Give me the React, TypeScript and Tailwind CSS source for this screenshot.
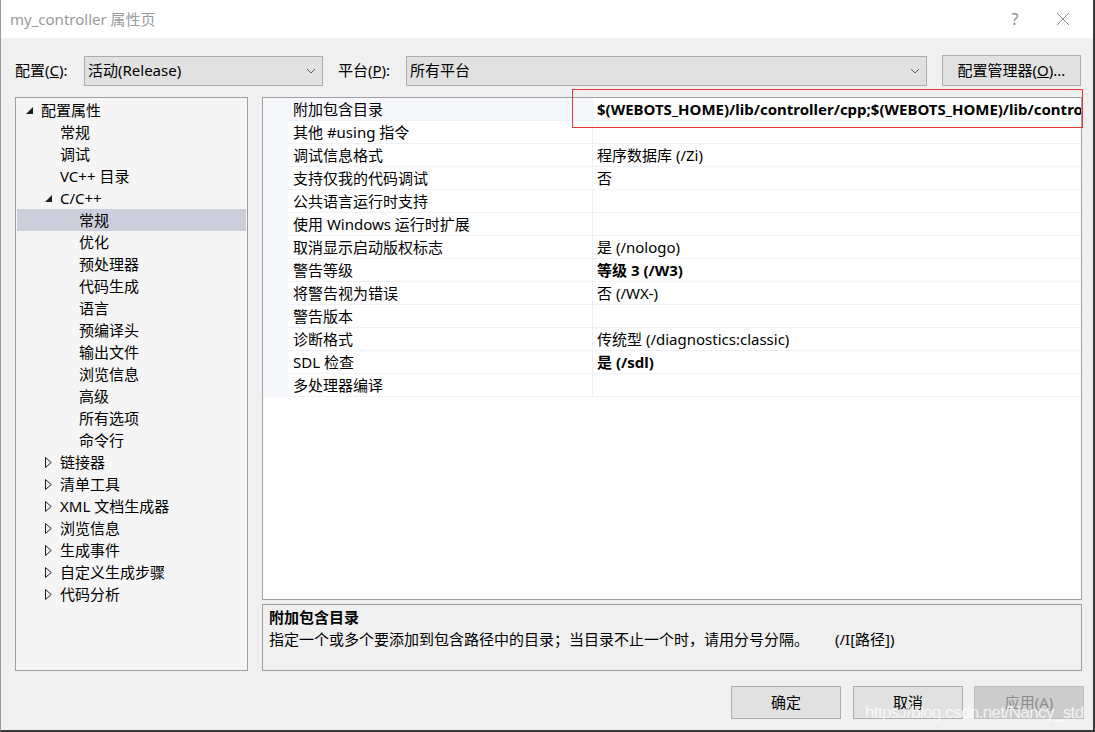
import React from 'react';

const font = "font-['Noto_Sans','Noto_Sans_CJK_SC',sans-serif]";

type TreeItem = { label: string; level: number; icon?: 'open' | 'closed'; selected?: boolean };

const treeItems: TreeItem[] = [
  { label: '配置属性', level: 0, icon: 'open' },
  { label: '常规', level: 1 },
  { label: '调试', level: 1 },
  { label: 'VC++ 目录', level: 1 },
  { label: 'C/C++', level: 1, icon: 'open' },
  { label: '常规', level: 2, selected: true },
  { label: '优化', level: 2 },
  { label: '预处理器', level: 2 },
  { label: '代码生成', level: 2 },
  { label: '语言', level: 2 },
  { label: '预编译头', level: 2 },
  { label: '输出文件', level: 2 },
  { label: '浏览信息', level: 2 },
  { label: '高级', level: 2 },
  { label: '所有选项', level: 2 },
  { label: '命令行', level: 2 },
  { label: '链接器', level: 1, icon: 'closed' },
  { label: '清单工具', level: 1, icon: 'closed' },
  { label: 'XML 文档生成器', level: 1, icon: 'closed' },
  { label: '浏览信息', level: 1, icon: 'closed' },
  { label: '生成事件', level: 1, icon: 'closed' },
  { label: '自定义生成步骤', level: 1, icon: 'closed' },
  { label: '代码分析', level: 1, icon: 'closed' },
];

const props: { name: string; value: string; bold?: boolean }[] = [
  { name: '附加包含目录', value: '$(WEBOTS_HOME)/lib/controller/cpp;$(WEBOTS_HOME)/lib/controller/c;%(AdditionalIncludeDirectories)', bold: true },
  { name: '其他 #using 指令', value: '' },
  { name: '调试信息格式', value: '程序数据库 (/Zi)' },
  { name: '支持仅我的代码调试', value: '否' },
  { name: '公共语言运行时支持', value: '' },
  { name: '使用 Windows 运行时扩展', value: '' },
  { name: '取消显示启动版权标志', value: '是 (/nologo)' },
  { name: '警告等级', value: '等级 3 (/W3)', bold: true },
  { name: '将警告视为错误', value: '否 (/WX-)' },
  { name: '警告版本', value: '' },
  { name: '诊断格式', value: '传统型 (/diagnostics:classic)' },
  { name: 'SDL 检查', value: '是 (/sdl)', bold: true },
  { name: '多处理器编译', value: '' },
];

function Chevron() {
  return (
    <svg width="10" height="6" viewBox="0 0 10 6" className="shrink-0">
      <path d="M1 1 L5 5 L9 1" fill="none" stroke="#606060" strokeWidth="1" />
    </svg>
  );
}

function TreeIcon({ kind }: { kind?: 'open' | 'closed' }) {
  if (kind === 'open')
    return (
      <svg width="7" height="7" viewBox="0 0 7 7">
        <path d="M7 0 L7 7 L0 7 Z" fill="#1e1e1e" />
      </svg>
    );
  if (kind === 'closed')
    return (
      <svg width="7" height="11" viewBox="0 0 7 11">
        <path d="M0.5 0.5 L6.2 5.5 L0.5 10.5 Z" fill="none" stroke="#1e1e1e" strokeWidth="1" />
      </svg>
    );
  return null;
}

function Select({ value, width }: { value: string; width: string }) {
  return (
    <div className={`${width} shrink-0 h-[30px] bg-[#e1e1e1] border border-[#adadad] flex items-center justify-between pl-[3px] pr-[6px]`}>
      <span className="text-[15px] text-black">{value}</span>
      <Chevron />
    </div>
  );
}

export default function App() {
  return (
    <div className={`relative w-[1095px] h-[732px] overflow-hidden flex flex-col border-l border-[#9a9a9a] border-r-2 border-b-2 border-r-[#3a3a3a] border-b-[#3a3a3a] ${font}`}>
      {/* Title bar */}
      <div className="h-[38px] bg-white flex items-center justify-between shrink-0">
        <span className="pl-[9px] text-[15px] text-[#9a9a9a]">my_controller 属性页</span>
        <div className="flex items-center text-[#8a8a8a]">
          <span className="w-[56px] text-center text-[16px]">?</span>
          <svg width="14" height="14" viewBox="0 0 14 14" className="mr-[23px] ml-[13px]">
            <path d="M1 1 L13 13 M13 1 L1 13" stroke="#8a8a8a" strokeWidth="1" />
          </svg>
        </div>
      </div>

      {/* Body */}
      <div className="flex-1 bg-[#f0f0f0] flex flex-col pl-[14px]">
        <div className="flex items-center mt-[17px] h-[31px] text-[15px] text-black">
          <span className="w-[69px] shrink-0">配置(<span className="underline">C</span>):</span>
          <Select value="活动(Release)" width="w-[239px]" />
          <span className="ml-[15px] w-[68px] shrink-0">平台(<span className="underline">P</span>):</span>
          <Select value="所有平台" width="w-[521px]" />
          <button className="ml-[15px] w-[139px] shrink-0 h-[31px] bg-[#e1e1e1] border border-[#adadad] text-[15px]">
            配置管理器(<span className="underline">O</span>)...
          </button>
        </div>

        <div className="flex mt-[11px] gap-[14px] h-[574px]">
          {/* Tree */}
          <div className="w-[233px] shrink-0 bg-[#f5f5f5] border border-[#a0a0a0] pt-px">
            {treeItems.map((t, i) => (
              <div
                key={i}
                className={`h-[22px] flex items-center mx-px text-[15px] text-black ${t.selected ? 'bg-[#cccedb]' : ''} ${
                  t.level === 0 ? 'pl-[7px]' : t.level === 1 ? 'pl-[26px]' : 'pl-[45px]'
                }`}
              >
                <span className="w-[17px] flex items-center justify-start pl-[2px]">
                  <TreeIcon kind={t.icon} />
                </span>
                <span className="whitespace-nowrap">{t.label}</span>
              </div>
            ))}
          </div>

          {/* Right side */}
          <div className="w-[820px] shrink-0 flex flex-col gap-[4px]">
            <div className="h-[504px] bg-white border border-[#a0a0a0] overflow-hidden">
              {props.map((p, i) => (
                <div key={i} className="flex h-[23px] text-[15px] text-black">
                  <div className="w-[25px] bg-[#f5f7fb] shrink-0" />
                  <div className={`w-[305px] shrink-0 pl-[5px] flex items-center border-b border-r border-[#eef1f6] whitespace-nowrap ${i === 0 ? 'bg-[#f5f7fb]' : ''}`}>
                    {p.name}
                  </div>
                  <div className={`flex-1 min-w-0 pl-[4px] flex items-center border-b border-[#eef1f6] whitespace-nowrap overflow-hidden ${p.bold ? 'font-bold' : ''}`}>
                    {p.value}
                  </div>
                </div>
              ))}
            </div>
            <div className="h-[67px] bg-[#f0f0f0] border border-[#a0a0a0] px-[6px] pt-[1px] text-[15px] text-black">
              <div className="font-bold leading-[22px]">附加包含目录</div>
              <div className="leading-[23px] whitespace-nowrap">
                指定一个或多个要添加到包含路径中的目录；当目录不止一个时，请用分号分隔。<span className="ml-[26px]">(/I[路径])</span>
              </div>
            </div>
          </div>
        </div>

        <div className="flex mt-[15px] pl-[716px] text-[15px]">
          <button className="w-[110px] h-[33px] shrink-0 bg-[#e1e1e1] border border-[#adadad] text-black">确定</button>
          <button className="ml-[12px] w-[110px] h-[33px] shrink-0 bg-[#e1e1e1] border border-[#adadad] text-black">取消</button>
          <button className="ml-[11px] w-[110px] h-[33px] shrink-0 bg-[#cccccc] border border-[#bfbfbf] text-[#8d8d8d]">应用(A)</button>
        </div>
      </div>

      {/* Red annotation box */}
      <div className="absolute left-[571px] top-[89px] w-[511px] h-[39px] border border-[#e8393a] pointer-events-none" />

      {/* Watermark */}
      <div className="absolute left-[864px] top-[700px] text-[17px] text-white/75 font-['Liberation_Sans',sans-serif] tracking-[-0.6px] whitespace-nowrap pointer-events-none">
        https://blog.csdn.net/Nancy_std
      </div>
    </div>
  );
}
